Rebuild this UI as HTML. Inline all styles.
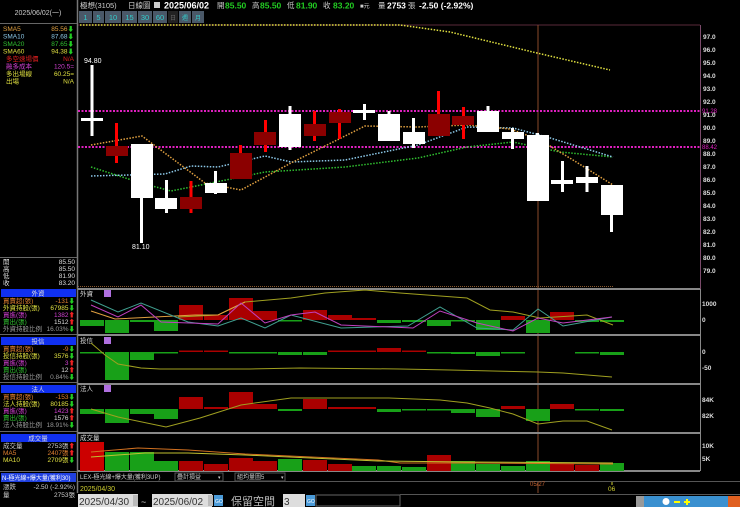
<!DOCTYPE html>
<html><head><meta charset="utf-8"><style>
html,body{margin:0;padding:0;background:#000;width:740px;height:507px;overflow:hidden}
svg{display:block}
text{font-family:"Liberation Sans","Noto Sans CJK TC",sans-serif}
</style></head><body>
<svg width="740" height="507" viewBox="0 0 740 507" xmlns="http://www.w3.org/2000/svg">
<rect width="740" height="507" fill="#000"/>
<!-- left panel -->
<line x1="77.5" y1="0" x2="77.5" y2="493" stroke="#777" stroke-width="1.5"/>
<line x1="0" y1="23.5" x2="77" y2="23.5" stroke="#666"/>
<text x="38" y="15" font-size="7" fill="#ccc" text-anchor="middle">2025/06/02(一)</text>
<g font-size="6.5">
<text x="3" y="31" fill="#e0a040">SMA5</text><text x="74" y="31" fill="#e0a040" text-anchor="end">85.56<tspan fill="#2c2">⬇</tspan></text>
<text x="3" y="38.5" fill="#8cc8e8">SMA10</text><text x="74" y="38.5" fill="#8cc8e8" text-anchor="end">87.68<tspan fill="#2c2">⬇</tspan></text>
<text x="3" y="46" fill="#30c030">SMA20</text><text x="74" y="46" fill="#30c030" text-anchor="end">87.65<tspan fill="#2c2">⬇</tspan></text>
<text x="3" y="53.5" fill="#e0e040">SMA60</text><text x="74" y="53.5" fill="#e0e040" text-anchor="end">94.38<tspan fill="#2c2">⬇</tspan></text>
<text x="6" y="61" fill="#e02020">多空速場價</text><text x="74" y="61" fill="#e02020" text-anchor="end">N/A</text>
<text x="6" y="68.5" fill="#d040d0">融多成本</text><text x="74" y="68.5" fill="#d040d0" text-anchor="end">120.5=</text>
<text x="6" y="76" fill="#e0e040">多出場線</text><text x="74" y="76" fill="#e0e040" text-anchor="end">60.25=</text>
<text x="6" y="83.5" fill="#e0e040">出場</text><text x="74" y="83.5" fill="#e0e040" text-anchor="end">N/A</text>
</g>
<line x1="0" y1="257.5" x2="77" y2="257.5" stroke="#666"/>
<g font-size="6.5" fill="#ddd">
<text x="3" y="264">開</text><text x="75" y="264" text-anchor="end">85.50</text>
<text x="3" y="271">高</text><text x="75" y="271" text-anchor="end">85.50</text>
<text x="3" y="278">低</text><text x="75" y="278" text-anchor="end">81.90</text>
<text x="3" y="285">收</text><text x="75" y="285" text-anchor="end">83.20</text>
</g>
<!-- section headers -->
<g font-size="6.5">
<rect x="1" y="289" width="75" height="8" fill="#1030f0"/><text x="38" y="295.5" fill="#ddd" text-anchor="middle">外資</text>
<text x="3" y="303" fill="#e08030">買賣超(張)</text><text x="75" y="303" fill="#e08030" text-anchor="end">-131<tspan fill="#2c2">⬇</tspan></text>
<text x="3" y="310" fill="#e0e040">外資持股(張)</text><text x="75" y="310" fill="#e0e040" text-anchor="end">67985<tspan fill="#2c2">⬇</tspan></text>
<text x="3" y="317" fill="#d040d0">買進(張)</text><text x="75" y="317" fill="#d040d0" text-anchor="end">1382<tspan fill="#e22">⬆</tspan></text>
<text x="3" y="324" fill="#30c030">賣出(張)</text><text x="75" y="324" fill="#ddd" text-anchor="end">1512<tspan fill="#e22">⬆</tspan></text>
<text x="3" y="331" fill="#999">外資持股比例</text><text x="75" y="331" fill="#999" text-anchor="end">16.03%<tspan fill="#2c2">⬇</tspan></text>
<line x1="0" y1="334.5" x2="77" y2="334.5" stroke="#666"/>
<rect x="1" y="337" width="75" height="8" fill="#1030f0"/><text x="38" y="343.5" fill="#ddd" text-anchor="middle">投信</text>
<text x="3" y="351" fill="#e08030">買賣超(張)</text><text x="75" y="351" fill="#e08030" text-anchor="end">-9<tspan fill="#2c2">⬇</tspan></text>
<text x="3" y="358" fill="#e0e040">投信持股(張)</text><text x="75" y="358" fill="#e0e040" text-anchor="end">3576<tspan fill="#2c2">⬇</tspan></text>
<text x="3" y="365" fill="#d040d0">買進(張)</text><text x="75" y="365" fill="#d040d0" text-anchor="end">3<tspan fill="#e22">⬆</tspan></text>
<text x="3" y="372" fill="#30c030">賣出(張)</text><text x="75" y="372" fill="#ddd" text-anchor="end">12<tspan fill="#e22">⬆</tspan></text>
<text x="3" y="379" fill="#999">投信持股比例</text><text x="75" y="379" fill="#999" text-anchor="end">0.84%<tspan fill="#2c2">⬇</tspan></text>
<line x1="0" y1="382.5" x2="77" y2="382.5" stroke="#666"/>
<rect x="1" y="385" width="75" height="8" fill="#1030f0"/><text x="38" y="391.5" fill="#ddd" text-anchor="middle">法人</text>
<text x="3" y="399" fill="#e08030">買賣超(張)</text><text x="75" y="399" fill="#e08030" text-anchor="end">-153<tspan fill="#2c2">⬇</tspan></text>
<text x="3" y="406" fill="#e0e040">法人持股(張)</text><text x="75" y="406" fill="#e0e040" text-anchor="end">80185<tspan fill="#2c2">⬇</tspan></text>
<text x="3" y="413" fill="#d040d0">買進(張)</text><text x="75" y="413" fill="#d040d0" text-anchor="end">1423<tspan fill="#e22">⬆</tspan></text>
<text x="3" y="420" fill="#30c030">賣出(張)</text><text x="75" y="420" fill="#ddd" text-anchor="end">1576<tspan fill="#e22">⬆</tspan></text>
<text x="3" y="427" fill="#999">法人持股比例</text><text x="75" y="427" fill="#999" text-anchor="end">18.91%<tspan fill="#2c2">⬇</tspan></text>
<line x1="0" y1="431.5" x2="77" y2="431.5" stroke="#666"/>
<rect x="1" y="434" width="75" height="8" fill="#1030f0"/><text x="38" y="440.5" fill="#ddd" text-anchor="middle">成交量</text>
<text x="3" y="448" fill="#ccc">成交量</text><text x="75" y="448" fill="#ccc" text-anchor="end">2753張<tspan fill="#e22">⬆</tspan></text>
<text x="3" y="455" fill="#e08030">MA5</text><text x="75" y="455" fill="#e08030" text-anchor="end">2407張<tspan fill="#e22">⬆</tspan></text>
<text x="3" y="462" fill="#e0e040">MA10</text><text x="75" y="462" fill="#e0e040" text-anchor="end">2709張<tspan fill="#2c2">⬇</tspan></text>
<line x1="0" y1="471.5" x2="77" y2="471.5" stroke="#666"/>
<rect x="1" y="473" width="75" height="9" fill="#2040e0"/><text x="2" y="480" fill="#fff" font-size="6">N-極光線+爆大量(獲利30)</text>
<text x="3" y="489" fill="#ccc">漲跌</text><text x="75" y="489" fill="#ccc" text-anchor="end">-2.50 (-2.92%)</text>
<text x="3" y="497" fill="#ccc">量</text><text x="75" y="497" fill="#ccc" text-anchor="end">2753張</text>
</g>
<!-- header -->
<g font-size="7.5">
<text x="80" y="8" fill="#ccc">極想(3105)</text>
<text x="128" y="8" fill="#ccc">日線圖</text>
<rect x="154" y="2" width="6" height="6" fill="#ccc"/>
<text x="164" y="8.5" fill="#fff" font-weight="bold" font-size="9">2025/06/02</text>
<text x="217" y="8" fill="#ccc">開</text><text x="225" y="8.5" fill="#2c2" font-weight="bold" font-size="8.5">85.50</text>
<text x="252" y="8" fill="#ccc">高</text><text x="260" y="8.5" fill="#2c2" font-weight="bold" font-size="8.5">85.50</text>
<text x="287" y="8" fill="#ccc">低</text><text x="296" y="8.5" fill="#2c2" font-weight="bold" font-size="8.5">81.90</text>
<text x="323" y="8" fill="#ccc">收</text><text x="333" y="8.5" fill="#2c2" font-weight="bold" font-size="8.5">83.20</text>
<text x="360" y="8" fill="#ccc" font-size="6">■元</text>
<text x="378" y="8" fill="#ccc">量</text><text x="387" y="8.5" fill="#fff" font-weight="bold" font-size="8.5">2753</text><text x="408" y="8" fill="#ccc">張</text>
<text x="419" y="8.5" fill="#fff" font-weight="bold" font-size="8.5">-2.50 (-2.92%)</text>
</g>
<g font-size="7.5" fill="#3cc">
<rect x="79" y="11" width="13" height="12" fill="#4a5868"/><text x="85.5" y="20" text-anchor="middle">1</text>
<rect x="93" y="11" width="11" height="12" fill="#4a5868"/><text x="98.5" y="20" text-anchor="middle">5</text>
<rect x="105" y="11" width="16" height="12" fill="#4a5868"/><text x="113" y="20" text-anchor="middle">10</text>
<rect x="122" y="11" width="15" height="12" fill="#4a5868"/><text x="129.5" y="20" text-anchor="middle">15</text>
<rect x="138" y="11" width="14" height="12" fill="#4a5868"/><text x="145" y="20" text-anchor="middle">30</text>
<rect x="153" y="11" width="14" height="12" fill="#4a5868"/><text x="160" y="20" text-anchor="middle">60</text>
<rect x="168" y="11" width="10" height="12" fill="#222"/><text x="173" y="20" text-anchor="middle" fill="#666" font-size="6">日</text>
<rect x="179" y="11" width="12" height="12" fill="#4a5868"/><text x="185" y="20" text-anchor="middle" font-size="6">週</text>
<rect x="192" y="11" width="12" height="12" fill="#4a5868"/><text x="198" y="20" text-anchor="middle" font-size="6">月</text>
</g>
<!-- main chart frame -->
<line x1="78" y1="25" x2="700" y2="25" stroke="#5a2a3a"/>
<line x1="700.5" y1="25" x2="700.5" y2="289" stroke="#7a4a6a"/>
<line x1="538" y1="25" x2="538" y2="493" stroke="#8a4a2a"/>
<polyline points="80,25 400,25 450,32 537,53 610,70" fill="none" stroke="#e0e040" stroke-width="1.5" stroke-dasharray="1.5,1.5"/>
<!-- magenta lines -->
<line x1="78" y1="111" x2="700" y2="111" stroke="#e020c0" stroke-width="2" stroke-dasharray="2,1.5"/>
<line x1="78" y1="147" x2="700" y2="147" stroke="#e020c0" stroke-width="2" stroke-dasharray="2,1.5"/>
<text x="702" y="113" fill="#e020c0" font-size="6">91.28</text>
<text x="702" y="149" fill="#e020c0" font-size="6">88.42</text>
<!-- MAs -->
<polyline points="91,167 141,183 171,191 211,183 265,172 345,167 418,158 467,147 513,142 560,152 613,157" fill="none" stroke="#30c030" stroke-width="1.5" stroke-dasharray="1.5,1.5"/>
<polyline points="91,176 165,174 191,166 218,167 265,156 291,162 345,160 418,145 467,127 513,128 547,137 613,157" fill="none" stroke="#8cc8e8" stroke-width="1.5" stroke-dasharray="1.5,1.5"/>
<polyline points="91,145 142,136 205,183 241,190 291,163 365,126 418,127 467,125 510,129 540,140 573,160 613,185" fill="none" stroke="#e0a040" stroke-width="1.5" stroke-dasharray="1.5,1.5"/>
<!-- candles -->
<g>
<rect x="90.5" y="65" width="3" height="71" fill="#fff"/><rect x="81" y="118" width="22" height="3" fill="#fff"/>
<rect x="115" y="123" width="3" height="40" fill="#f00"/><rect x="106" y="146" width="22" height="10" fill="#8b0000"/>
<rect x="140" y="144" width="3" height="99" fill="#fff"/><rect x="131" y="144" width="22" height="54" fill="#fff"/>
<rect x="165" y="180" width="3" height="33" fill="#fff"/><rect x="155" y="198" width="22" height="11" fill="#fff"/>
<rect x="189.5" y="181" width="3" height="32" fill="#f00"/><rect x="180" y="197" width="22" height="12" fill="#8b0000"/>
<rect x="214" y="171" width="3" height="23" fill="#fff"/><rect x="205" y="183" width="22" height="10" fill="#fff"/>
<rect x="239" y="145" width="3" height="34" fill="#f00"/><rect x="230" y="153" width="22" height="26" fill="#8b0000"/>
<rect x="264" y="120" width="3" height="32" fill="#f00"/><rect x="254" y="132" width="22" height="13" fill="#8b0000"/>
<rect x="288.5" y="106" width="3" height="44" fill="#fff"/><rect x="279" y="114" width="22" height="33" fill="#fff"/>
<rect x="313" y="111" width="3" height="30" fill="#f00"/><rect x="304" y="124" width="22" height="12" fill="#8b0000"/>
<rect x="338" y="109" width="3" height="30" fill="#f00"/><rect x="329" y="112" width="22" height="11" fill="#8b0000"/>
<rect x="363" y="104" width="3" height="16" fill="#fff"/><rect x="353" y="110" width="22" height="3" fill="#fff"/>
<rect x="387.5" y="111" width="3" height="30" fill="#fff"/><rect x="378" y="114" width="22" height="27" fill="#fff"/>
<rect x="412" y="118" width="3" height="30" fill="#fff"/><rect x="403" y="132" width="22" height="12" fill="#fff"/>
<rect x="437" y="91" width="3" height="45" fill="#f00"/><rect x="428" y="114" width="22" height="22" fill="#8b0000"/>
<rect x="462" y="107" width="3" height="32" fill="#f00"/><rect x="452" y="116" width="22" height="9" fill="#8b0000"/>
<rect x="486.5" y="106" width="3" height="26" fill="#fff"/><rect x="477" y="111" width="22" height="21" fill="#fff"/>
<rect x="511" y="128" width="3" height="21" fill="#fff"/><rect x="502" y="132" width="22" height="7" fill="#fff"/>
<rect x="536" y="133" width="3" height="68" fill="#fff"/><rect x="527" y="135" width="22" height="66" fill="#fff"/>
<rect x="561" y="161" width="3" height="31" fill="#fff"/><rect x="551" y="180" width="22" height="4" fill="#fff"/>
<rect x="585.5" y="166" width="3" height="26" fill="#fff"/><rect x="576" y="177" width="22" height="6" fill="#fff"/>
<rect x="610" y="185" width="3" height="47" fill="#fff"/><rect x="601" y="185" width="22" height="30" fill="#fff"/>
</g>
<text x="84" y="63" fill="#fff" font-size="7">94.80</text>
<text x="132" y="249" fill="#fff" font-size="7">81.10</text>
<!-- right axis -->
<g font-size="6.5" fill="#ddd" font-weight="bold">
<text x="703" y="39">97.0</text><text x="703" y="52">96.0</text><text x="703" y="65">95.0</text><text x="703" y="78">94.0</text>
<text x="703" y="91">93.0</text><text x="703" y="104">92.0</text><text x="703" y="117">91.0</text><text x="703" y="130">90.0</text>
<text x="703" y="143">89.0</text><text x="703" y="156">88.0</text><text x="703" y="169">87.0</text><text x="703" y="182">86.0</text>
<text x="703" y="195">85.0</text><text x="703" y="208">84.0</text><text x="703" y="221">83.0</text><text x="703" y="234">82.0</text>
<text x="703" y="247">81.0</text><text x="703" y="260">80.0</text><text x="703" y="273">79.0</text>
<text x="702" y="306">1000</text><text x="702" y="322">0</text>
<text x="702" y="354">0</text><text x="702" y="370">-50</text>
<text x="702" y="402">84K</text><text x="702" y="418">82K</text>
<text x="702" y="448">10K</text><text x="702" y="461">5K</text><text x="702" y="478">0</text>
</g>
<line x1="78" y1="286.5" x2="613" y2="286.5" stroke="#8a5a30" stroke-dasharray="1,1"/>
<!-- separators -->
<g stroke="#888" stroke-width="2">
<line x1="78" y1="289" x2="700" y2="289"/><line x1="78" y1="335" x2="700" y2="335"/>
<line x1="78" y1="384" x2="700" y2="384"/><line x1="78" y1="433" x2="700" y2="433"/>
<line x1="78" y1="471" x2="700" y2="471"/>
</g>
<line x1="700.5" y1="289" x2="700.5" y2="471" stroke="#888"/>
<!-- panel labels -->
<g font-size="6.5" fill="#ddd">
<text x="80" y="296">外資</text><rect x="104" y="290" width="7" height="7" fill="#b070e0"/>
<text x="80" y="343">投信</text><rect x="104" y="337" width="7" height="7" fill="#b070e0"/>
<text x="80" y="391">法人</text><rect x="104" y="385" width="7" height="7" fill="#b070e0"/>
<text x="80" y="440">成交量</text>
</g>
<!-- panel1 bars zero 320 -->
<g>
<rect x="80" y="320" width="24" height="6" fill="#18a018"/><rect x="105" y="320" width="24" height="13" fill="#18a018"/>
<rect x="130" y="320" width="24" height="2" fill="#18a018"/><rect x="154" y="320" width="24" height="11" fill="#18a018"/>
<rect x="179" y="305" width="24" height="15" fill="#a00"/><rect x="204" y="315" width="24" height="5" fill="#a00"/>
<rect x="229" y="298" width="24" height="22" fill="#a00"/><rect x="253" y="311" width="24" height="9" fill="#a00"/>
<rect x="278" y="320" width="24" height="1.5" fill="#18a018"/><rect x="303" y="310" width="24" height="10" fill="#a00"/>
<rect x="328" y="315" width="24" height="5" fill="#a00"/><rect x="352" y="318" width="24" height="2" fill="#a00"/>
<rect x="377" y="320" width="24" height="3" fill="#18a018"/><rect x="402" y="320" width="24" height="2" fill="#18a018"/>
<rect x="427" y="320" width="24" height="6" fill="#18a018"/><rect x="451" y="320" width="24" height="1.5" fill="#18a018"/>
<rect x="476" y="320" width="24" height="10" fill="#18a018"/><rect x="501" y="316" width="24" height="4" fill="#a00"/>
<rect x="526" y="320" width="24" height="13" fill="#18a018"/><rect x="550" y="312" width="24" height="8" fill="#a00"/>
<rect x="575" y="320" width="24" height="2" fill="#18a018"/><rect x="600" y="320" width="24" height="2" fill="#18a018"/>
</g>
<polyline points="178,317 218,315 245,302 291,298 325,293 365,290 400,293 467,298 490,310 513,312 540,318 587,315 613,325" fill="none" stroke="#a0a020" stroke-width="1"/>
<polyline points="91,311 115,319 195,315 218,315 245,302" fill="none" stroke="#e0a040" stroke-width="1"/>
<polyline points="91,300 118,312 141,303 188,322 218,326 241,318 265,328 291,315 341,328 408,326 440,307 477,328 513,330 538,309 563,326 612,317" fill="none" stroke="#40a090" stroke-width="1"/>
<polyline points="91,305 118,317 141,305 161,322 218,324 241,303 265,323 291,315 315,312 341,325 413,328 440,311 477,323 513,331 538,318 563,323 612,317" fill="none" stroke="#c040c0" stroke-width="1"/>
<!-- panel2 zero 352 -->
<g>
<rect x="80" y="352" width="24" height="1.5" fill="#18a018"/><rect x="105" y="352" width="24" height="28" fill="#18a018"/>
<rect x="130" y="352" width="24" height="8" fill="#18a018"/><rect x="154" y="352" width="24" height="1.5" fill="#18a018"/>
<rect x="179" y="350.5" width="24" height="1.5" fill="#a00"/><rect x="204" y="350.5" width="24" height="1.5" fill="#a00"/>
<rect x="229" y="352" width="24" height="1.5" fill="#18a018"/><rect x="253" y="352" width="24" height="1.5" fill="#18a018"/>
<rect x="278" y="352" width="24" height="3" fill="#18a018"/><rect x="303" y="352" width="24" height="3" fill="#18a018"/>
<rect x="328" y="350.5" width="24" height="1.5" fill="#a00"/><rect x="352" y="350.5" width="24" height="1.5" fill="#a00"/>
<rect x="377" y="348" width="24" height="4" fill="#a00"/><rect x="402" y="350.5" width="24" height="1.5" fill="#a00"/>
<rect x="427" y="352" width="24" height="1.5" fill="#18a018"/><rect x="451" y="352" width="24" height="2" fill="#18a018"/>
<rect x="476" y="352" width="24" height="4" fill="#18a018"/><rect x="501" y="352" width="24" height="1.5" fill="#18a018"/>
<rect x="575" y="352" width="24" height="1.5" fill="#18a018"/><rect x="600" y="352" width="24" height="3" fill="#18a018"/>
</g>
<polyline points="91,343 105,355 118,364 141,368 160,369 250,369 300,368 400,369 450,370 538,372 563,373 612,377" fill="none" stroke="#a0a020" stroke-width="1"/>
<!-- panel3 zero 409 -->
<g>
<rect x="80" y="409" width="24" height="5" fill="#18a018"/><rect x="105" y="409" width="24" height="14" fill="#18a018"/>
<rect x="130" y="409" width="24" height="5" fill="#18a018"/><rect x="154" y="409" width="24" height="10" fill="#18a018"/>
<rect x="179" y="397" width="24" height="12" fill="#a00"/><rect x="204" y="407" width="24" height="2" fill="#a00"/>
<rect x="229" y="392" width="24" height="17" fill="#a00"/><rect x="253" y="404" width="24" height="5" fill="#a00"/>
<rect x="278" y="409" width="24" height="2" fill="#18a018"/><rect x="303" y="399" width="24" height="10" fill="#a00"/>
<rect x="328" y="407" width="24" height="2" fill="#a00"/><rect x="352" y="407" width="24" height="2" fill="#a00"/>
<rect x="377" y="409" width="24" height="3" fill="#18a018"/><rect x="402" y="409" width="24" height="1.5" fill="#18a018"/>
<rect x="427" y="409" width="24" height="1.5" fill="#18a018"/><rect x="451" y="409" width="24" height="4" fill="#18a018"/>
<rect x="476" y="409" width="24" height="8" fill="#18a018"/><rect x="501" y="406" width="24" height="3" fill="#a00"/>
<rect x="526" y="409" width="24" height="12" fill="#18a018"/><rect x="550" y="404" width="24" height="5" fill="#a00"/>
<rect x="575" y="409" width="24" height="1.5" fill="#18a018"/><rect x="600" y="409" width="24" height="2" fill="#18a018"/>
</g>
<polyline points="91,409 118,417 166,427 200,418 241,405 291,398 340,398 389,398 440,400 467,403 490,408 513,414 538,424 563,421 587,421 612,430" fill="none" stroke="#a0a020" stroke-width="1"/>
<!-- panel4 base 471 -->
<g>
<rect x="80" y="442" width="24" height="29" fill="#c00"/><rect x="105" y="452" width="24" height="19" fill="#18a018"/>
<rect x="130" y="452" width="24" height="19" fill="#18a018"/><rect x="154" y="461" width="24" height="10" fill="#18a018"/>
<rect x="179" y="461" width="24" height="10" fill="#a00"/><rect x="204" y="464" width="24" height="7" fill="#a00"/>
<rect x="229" y="458" width="24" height="13" fill="#a00"/><rect x="253" y="461" width="24" height="10" fill="#a00"/>
<rect x="278" y="459" width="24" height="12" fill="#18a018"/><rect x="303" y="460" width="24" height="11" fill="#a00"/>
<rect x="328" y="464" width="24" height="7" fill="#a00"/><rect x="352" y="466" width="24" height="5" fill="#18a018"/>
<rect x="377" y="466" width="24" height="5" fill="#18a018"/><rect x="402" y="467" width="24" height="4" fill="#18a018"/>
<rect x="427" y="455" width="24" height="16" fill="#a00"/><rect x="451" y="461" width="24" height="10" fill="#18a018"/>
<rect x="476" y="464" width="24" height="7" fill="#18a018"/><rect x="501" y="466" width="24" height="5" fill="#18a018"/>
<rect x="526" y="461" width="24" height="10" fill="#18a018"/><rect x="550" y="464" width="24" height="7" fill="#a00"/>
<rect x="575" y="465" width="24" height="6" fill="#a00"/><rect x="600" y="463" width="24" height="8" fill="#18a018"/>
</g>
<polyline points="91,452 138,448 188,450 245,454 311,457 378,460 400,463 467,463 613,464" fill="none" stroke="#d07020" stroke-width="1"/>
<polyline points="91,457 145,453 188,453 245,455 311,458 378,461 467,462 613,463" fill="none" stroke="#c0c030" stroke-width="1"/>
<!-- bottom rows -->
<rect x="78" y="472" width="662" height="9" fill="#000"/>
<line x1="78" y1="481.5" x2="740" y2="481.5" stroke="#555"/>
<g font-size="6" fill="#ccc">
<text x="80" y="479">LEX-極光線+爆大量(獲利3UP)</text>
<rect x="175" y="473" width="48" height="8" fill="none" stroke="#555"/><text x="177" y="479">疊計損益</text><text x="218" y="479" font-size="5">▾</text>
<rect x="235" y="473" width="50" height="8" fill="none" stroke="#555"/><text x="237" y="479">組均量圖5</text><text x="281" y="479" font-size="5">▾</text>
</g>
<text x="80" y="491" fill="#d0d030" font-size="7">2025/04/30</text>
<text x="530" y="486" fill="#c06030" font-size="6">05/27</text>
<text x="608" y="491" fill="#d0d030" font-size="6.5">06</text>
<line x1="612" y1="482" x2="612" y2="485" stroke="#d0d030"/>
<!-- date bar -->
<rect x="78" y="494" width="60" height="13" fill="#ddd"/><text x="79" y="505" fill="#333" font-size="10">2025/04/30</text>
<rect x="133" y="495" width="5" height="11" fill="#bbb"/>
<text x="141" y="505" fill="#ccc" font-size="9">~</text>
<rect x="152" y="494" width="60" height="13" fill="#ddd"/><text x="153" y="505" fill="#333" font-size="10">2025/06/02</text>
<rect x="208" y="495" width="5" height="11" fill="#bbb"/>
<rect x="214" y="495" width="9" height="11" fill="#4a9ad8"/><text x="215" y="503" fill="#fff" font-size="5">GO</text>
<text x="231" y="505" fill="#bbb" font-size="11">保留空間</text>
<rect x="283" y="494" width="22" height="13" fill="#ddd"/><text x="284" y="505" fill="#333" font-size="10">3</text>
<rect x="306" y="495" width="9" height="11" fill="#4a9ad8"/><text x="307" y="503" fill="#fff" font-size="5">GO</text>
<rect x="316" y="495" width="84" height="11" fill="none" stroke="#666"/>
<rect x="400" y="494" width="340" height="1" fill="#555"/>
<rect x="636" y="496" width="104" height="11" fill="#3a90d0"/>
<rect x="636" y="496" width="8" height="11" fill="#999"/>
<g fill="#fff">
<circle cx="666" cy="501.5" r="3.5"/><rect x="674" y="501" width="6" height="2" fill="#ff0"/><rect x="684" y="501" width="6" height="2" fill="#ff0"/><rect x="686" y="499" width="2" height="6" fill="#ff0"/>
</g>
<rect x="728" y="496" width="12" height="11" fill="#e06020"/>
</svg>
</body></html>
